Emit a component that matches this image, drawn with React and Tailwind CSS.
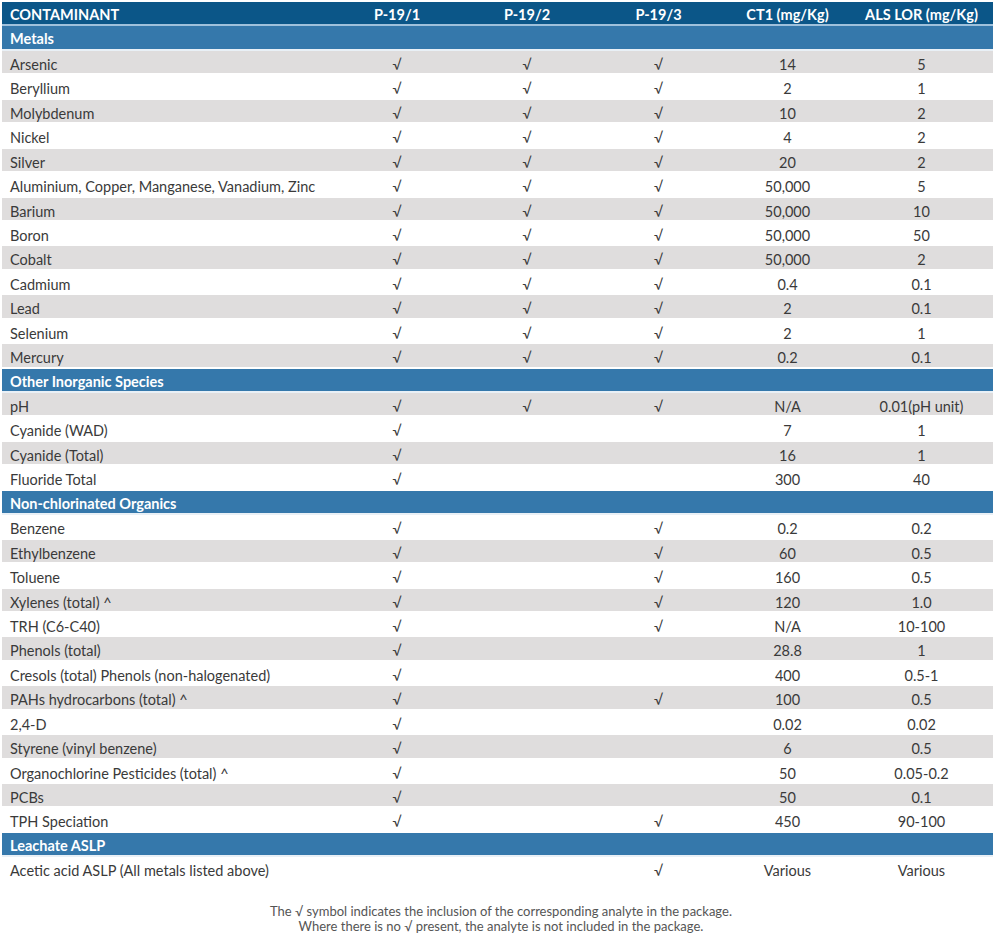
const C = "√";

const sections = [
  {
    title: "Metals",
    rows: [
      ["Arsenic", C, C, C, "14", "5"],
      ["Beryllium", C, C, C, "2", "1"],
      ["Molybdenum", C, C, C, "10", "2"],
      ["Nickel", C, C, C, "4", "2"],
      ["Silver", C, C, C, "20", "2"],
      ["Aluminium, Copper, Manganese, Vanadium, Zinc", C, C, C, "50,000", "5"],
      ["Barium", C, C, C, "50,000", "10"],
      ["Boron", C, C, C, "50,000", "50"],
      ["Cobalt", C, C, C, "50,000", "2"],
      ["Cadmium", C, C, C, "0.4", "0.1"],
      ["Lead", C, C, C, "2", "0.1"],
      ["Selenium", C, C, C, "2", "1"],
      ["Mercury", C, C, C, "0.2", "0.1"],
    ],
  },
  {
    title: "Other Inorganic Species",
    rows: [
      ["pH", C, C, C, "N/A", "0.01(pH unit)"],
      ["Cyanide (WAD)", C, "", "", "7", "1"],
      ["Cyanide (Total)", C, "", "", "16", "1"],
      ["Fluoride Total", C, "", "", "300", "40"],
    ],
  },
  {
    title: "Non-chlorinated Organics",
    rows: [
      ["Benzene", C, "", C, "0.2", "0.2"],
      ["Ethylbenzene", C, "", C, "60", "0.5"],
      ["Toluene", C, "", C, "160", "0.5"],
      ["Xylenes (total) ^", C, "", C, "120", "1.0"],
      ["TRH (C6-C40)", C, "", C, "N/A", "10-100"],
      ["Phenols (total)", C, "", "", "28.8", "1"],
      ["Cresols (total) Phenols (non-halogenated)", C, "", "", "400", "0.5-1"],
      ["PAHs hydrocarbons (total) ^", C, "", C, "100", "0.5"],
      ["2,4-D", C, "", "", "0.02", "0.02"],
      ["Styrene (vinyl benzene)", C, "", "", "6", "0.5"],
      ["Organochlorine Pesticides (total) ^", C, "", "", "50", "0.05-0.2"],
      ["PCBs", C, "", "", "50", "0.1"],
      ["TPH Speciation", C, "", C, "450", "90-100"],
    ],
  },
  {
    title: "Leachate ASLP",
    rows: [["Acetic acid ASLP (All metals listed above)", "", "", C, "Various", "Various"]],
  },
];

const cols = "grid grid-cols-[330px_130px_130px_133px_125px_143px]";

export default function App() {
  let idx = 1;
  const body = [];
  sections.forEach((s) => {
    body.push(
      <div key={s.title} className={`${cols} h-[24.45px] pt-[2px] border-b-2 border-[#e9f0f6] bg-[#3578ab] items-center text-white font-bold`}>
        <div className="pl-2">{s.title}</div>
      </div>
    );
    idx++;
    s.rows.forEach((r) => {
      const gray = idx % 2 === 0;
      body.push(
        <div key={r[0]} className={`${cols} h-[24.45px] pt-[3px] border-b-2 border-white items-center ${gray ? "bg-[#dfdddd]" : "bg-white"}`}>
          <div className="pl-2 whitespace-nowrap">{r[0]}</div>
          {r.slice(1).map((v, i) => (
            <div key={i} className="text-center">{v}</div>
          ))}
        </div>
      );
      idx++;
    });
  });

  return (
    <div className="bg-white min-h-[948px] pt-[2px] pl-[2px] font-['Lato','Liberation_Sans',sans-serif] text-[14.5px] text-[#3a3a3a]">
      <div className="w-[991px]">
        <div className={`${cols} h-[24.45px] pt-[2px] border-b-2 border-[#9fc1dc] bg-[#0b5688] items-center text-white font-bold`}>
          <div className="pl-2">CONTAMINANT</div>
          <div className="text-center">P-19/1</div>
          <div className="text-center">P-19/2</div>
          <div className="text-center">P-19/3</div>
          <div className="text-center">CT1 (mg/Kg)</div>
          <div className="text-center">ALS LOR (mg/Kg)</div>
        </div>
        {body}
      </div>
      <div className="mt-[22px] text-center text-[13px] leading-[15px] text-[#555]">
        <p>The √ symbol indicates the inclusion of the corresponding analyte in the package.</p>
        <p>Where there is no √ present, the analyte is not included in the package.</p>
      </div>
    </div>
  );
}
